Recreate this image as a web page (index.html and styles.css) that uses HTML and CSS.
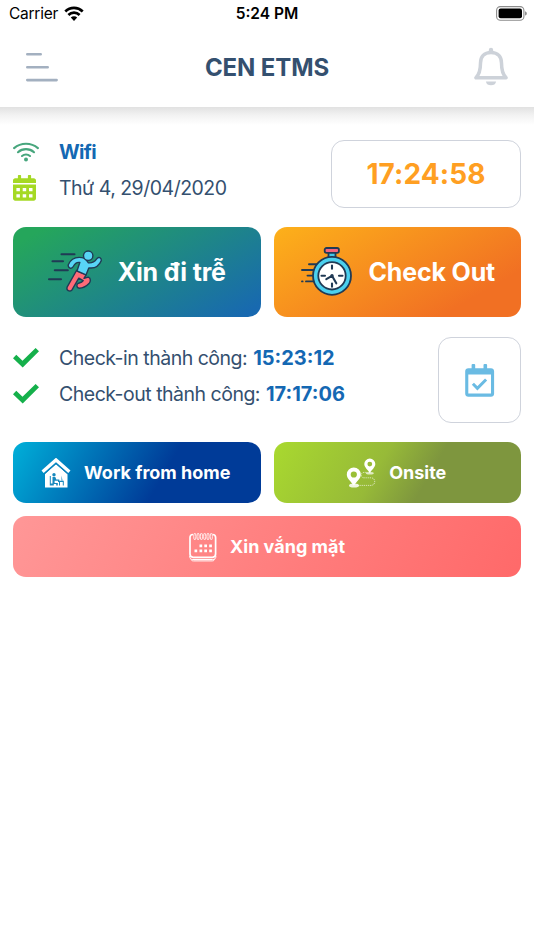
FILE: index.html
```
<!DOCTYPE html>
<html lang="vi">
<head>
    <title>CEN ETMS</title>
    <meta charset="UTF-8">
    <meta name="viewport" content="width=device-width, initial-scale=1.0">
    <link rel="stylesheet" href="styles.css">
</head>

<body>
    <header class="header">
        <div class="status-bar">
            <div class="carrier">
                <span class="carrier-name">Carrier</span>
                <svg width="20" height="16" viewBox="0 0 20 16">
                    <g fill="none" stroke="#000" stroke-width="2.7">
                        <path d="M1.3 5.4a12.6 12.6 0 0 1 17.4 0"/>
                        <path d="M4.4 9a8 8 0 0 1 11.2 0"/>
                    </g>
                    <path d="M10 14.9l-3.2-3.3a4.6 4.6 0 0 1 6.4 0z"/>
                </svg>
            </div>
            <span class="clock">5:24 PM</span>
            <svg class="battery" width="31" height="15" viewBox="0 0 31 15">
                <rect x=".6" y=".6" width="27.3" height="13.6" rx="3.8" fill="none" stroke="#8c8c8c" stroke-width="1.1"/>
                <rect x="2.6" y="2.6" width="23.4" height="9.7" rx="2"/>
                <path d="M29.2 5.2c2 .8 2 3.6 0 4.4z" fill="#777"/>
            </svg>
        </div>
        <div class="nav-bar">
            <svg class="menu-icon" width="34" height="32" viewBox="0 0 34 32">
                <path d="M2.3 3.3h13.4M2.3 16.300h20.400M2.300 29.100h29.300" stroke="#a3b0c0" stroke-width="2.600" stroke-linecap="round"/>
            </svg>
            <h1 class="title">CEN ETMS</h1>
            <svg class="bell-icon" width="36" height="40" viewBox="0 0 36 40">
                <path d="M18 5.500C11 5.500 7.500 10 7.500 16c0 7.500-1.200 11.500-4.600 14.700h30.200c-3.400-3.200-4.600-7.200-4.600-14.700C28.500 10 25 5.500 18 5.500z" fill="none" stroke="#cdd2d9" stroke-width="3.500" stroke-linejoin="round"/>
                <rect x="15.800" y=".700" width="4.400" height="5" rx="2.200" fill="#cdd2d9"/>
                <path d="M12.900 34.500h10.200a5.200 4.800 0 0 1-10.200 0z" fill="#cdd2d9"/>
            </svg>
        </div>
    </header>

    <main class="content">
        <section class="today">
            <div class="info-list">
                <div class="info-row">
                    <svg class="info-icon" width="26" height="20" viewBox="0 0 26 20">
                        <g fill="none" stroke="#47a67d" stroke-width="2.100" stroke-linecap="round">
                            <path d="M1.100 6.100a18.500 18.500 0 0 1 23.800 0"/>
                            <path d="M5 10.200a12 12 0 0 1 16 0"/>
                            <path d="M9 14a6.200 6.200 0 0 1 8 0"/>
                        </g>
                        <circle cx="13" cy="17.600" r="2" fill="#47a67d"/>
                    </svg>
                    <span class="wifi-name">Wifi</span>
                </div>
                <div class="info-row">
                    <svg class="info-icon" width="26" height="26" viewBox="0 0 26 26">
                        <path fill="#a5d924" fill-rule="evenodd" d="M0 8V5.500C0 4.300 1 3.300 2.200 3.300h2.700V.700q0-.700.700-.700h1.800q.700 0 .700.700v2.600h6.800V.700q0-.700.700-.700h1.800q.700 0 .700.700v2.600h2.700c1.200 0 2.200 1 2.200 2.200V8zM0 9.600h23v13.900c0 1.200-1 2.200-2.200 2.200H2.200C1 25.700 0 24.700 0 23.500zM3.400 13v3.200h3.500V13zM9.700 13v3.200h3.500V13zM16 13v3.200h3.500V13zM3.400 19.300v3.200h3.500v-3.200zM9.700 19.300v3.200h3.500v-3.200zM16 19.300v3.200h3.500v-3.200z"/>
                    </svg>
                    <span class="date">Thứ 4, 29/04/2020</span>
                </div>
            </div>
            <div class="time-box"><span>17:24:58</span></div>
        </section>

        <section class="actions">
            <button class="btn btn-late">
                <svg width="56" height="44" viewBox="0 0 56 44">
                    <path d="M13.500 4.200h13M4.500 11.200h10.500M6.800 20.200h13M1 29.200h12" stroke="#203a55" stroke-width="2.100" stroke-linecap="round"/>
                    <g stroke="#203a55" stroke-width="1.400" stroke-linejoin="round">
                        <path fill="#ff6b78" d="M28.500 20.500l9.700 4.200-2.200 3.700 4.200-1.300c3 1 2.500 4.500.8 6.500-2.800 2.900-6.300 4.700-9.800 4.700-3-.7-3-4-.6-5.100 2.300-.5 4-1.500 4.600-2.600l-4.400-2.400-6.800 11.700c-2.400 2.400-6 .6-4.900-2.700z"/>
                        <path fill="#58d5f6" d="M29 21l2.800-8.500c-2.900-.6-4.700.7-6.500 4-1.700 3-5.700 1.700-5-1.800C23 8.500 28.500 5.900 37 8.300l3.400 4.500c3.900.5 6-.8 8.300-4 1.900-2.500 5-1 4.500 2-2.300 5.600-6.700 7.900-12.400 7.100l-2.800 7z"/>
                        <circle cx="40.200" cy="5.700" r="4.700" fill="#58d5f6"/>
                    </g>
                </svg>
                <span class="late-text">Xin đi trễ</span>
            </button>
            <button class="btn btn-checkout">
                <svg width="52" height="50" viewBox="0 0 52 50">
                    <path d="M8 17.300h8M1 23h12M6.500 28.600h7M5 34.400h9M1 34.400h.6" stroke="#203a55" stroke-width="1.900" stroke-linecap="round"/>
                    <g stroke="#203a55" stroke-width="1.800">
                        <path d="M27.500 5h7v7h-7z" fill="#42c6ea"/>
                        <rect x="23.700" y="1" width="14.200" height="4.800" rx="1.800" fill="#f5647c"/>
                        <circle cx="31" cy="28.800" r="19" fill="#4bd0ee"/>
                        <circle cx="31" cy="28.800" r="13.700" fill="#fff"/>
                    </g>
                    <path d="M31 18.500v3.200M31 36.500v3.200M20.500 28.800H24M38 28.800h3.500M31 28.800l-5.700 3.400M31 28.800l4.300 7.500" stroke="#203a55" stroke-width="2.100" stroke-linecap="round" fill="none"/>
                    <circle cx="31" cy="28.800" r="1.700" fill="#203a55"/>
                </svg>
                <span class="checkout-text">Check Out</span>
            </button>
        </section>

        <section class="results">
            <div class="result-list">
                <div class="info-row">
                    <svg class="info-icon" width="26" height="20" viewBox="0 0 26 20">
                        <path d="M0 10.200L3.300 6.800 9.500 12.800 22.600 0 26 3.300 9.700 19.500z" fill="#15b04b"/>
                    </svg>
                    <span class="result-text">Check-in thành công:</span><b class="result-time">15:23:12</b>
                </div>
                <div class="info-row">
                    <svg class="info-icon" width="26" height="20" viewBox="0 0 26 20">
                        <path d="M0 10.200L3.300 6.800 9.500 12.800 22.600 0 26 3.300 9.700 19.500z" fill="#15b04b"/>
                    </svg>
                    <span class="result-text">Check-out thành công:</span><b class="result-time">17:17:06</b>
                </div>
            </div>
            <div class="calendar-box">
                <svg width="30" height="33" viewBox="0 0 30 33">
                    <path fill="#6abbe3" fill-rule="evenodd" d="M3.300 4.300H6.600V1q0-1 1-1h1.600q1 0 1 1v3.300h8.300V1q0-1 1-1h1.600q1 0 1 1v3.300h3.900c1.800 0 3.100 1.300 3.100 3v22.400c0 1.700-1.300 3-3.100 3H3.300c-1.800 0-3.100-1.300-3.100-3V7.300c0-1.700 1.300-3 3.100-3zM3.300 10.400v19.100h22.700V10.400z"/>
                    <path d="M7.900 19.700l4.500 4.600 8.700-8.800" fill="none" stroke="#6abbe3" stroke-width="3"/>
                </svg>
            </div>
        </section>

        <section class="requests">
            <button class="btn btn-home">
                <svg width="30" height="30" viewBox="0 0 30 30">
                    <path d="M4 16L15 6.300 26.500 16v13.500H4z" fill="#fff"/>
                    <path d="M3.500 15.800L15 5.600l11.500 10.200" fill="none" stroke="#0f7fba" stroke-width="1"/>
                    <path d="M1.600 13.700L15 1.900l13.400 11.800" fill="none" stroke="#fff" stroke-width="3.300"/>
                    <g fill="#1788bd">
                        <circle cx="13" cy="16.800" r="1.700"/>
                        <path d="M11.500 19h2.800l1 2.500h3v1.300h-4.700V25h3.200v2.500h-1.600v-1.500h-3.700zM8.800 18h1v7.500h3v2H8.800zM17 22.800h5.800v4.700h-1V24H19v3.500h-1V24h-1zM20.500 17.500l1 5h-1z"/>
                    </g>
                </svg>
                <span class="home-text">Work from home</span>
            </button>
            <button class="btn btn-onsite">
                <svg width="30" height="30" viewBox="0 0 30 30">
                    <g fill="#fff">
                        <ellipse cx="8" cy="27.500" rx="5" ry="2.100" opacity=".85"/>
                        <ellipse cx="23.800" cy="15.300" rx="4" ry="1.200" opacity=".7"/>
                        <path fill-rule="evenodd" d="M7.800 9.400a7 7 0 0 1 7 7c0 4.300-4.200 6.800-7 11.200C5 23.200.8 20.700.8 16.400a7 7 0 0 1 7-7zm0 4a3.100 3.100 0 1 0 0 6.200 3.100 3.100 0 0 0 0-6.200z"/>
                        <path fill-rule="evenodd" d="M23.800.6a5.500 5.500 0 0 1 5.500 5.500c0 3.300-3.300 5.400-5.500 9.100-2.200-3.700-5.500-5.800-5.500-9.100A5.500 5.500 0 0 1 23.800.6zm0 3.100a2.400 2.400 0 1 0 0 4.800 2.400 2.400 0 0 0 0-4.800z"/>
                    </g>
                    <path d="M20.500 14.400h-2.500c-3.800 0-3.800 5.400 0 5.400h7c5 0 5 7.600 0 7.600H12" fill="none" stroke="#fff" stroke-width=".8" stroke-dasharray="1.300 .8" opacity=".75"/>
                </svg>
                <span class="onsite-text">Onsite</span>
            </button>
            <button class="btn btn-absent">
                <svg width="28" height="30" viewBox="0 0 28 30">
                    <g fill="none" stroke="#fff">
                        <path d="M4 2.500c-2 0-3 1-3 3v16.600c0 2.200 1 3.200 3.200 3.200h19.200c2.200 0 3.200-1 3.200-3.200V5.500c0-2-1-3-3-3" stroke-width="1.700"/>
                        <path d="M.7 24c0 2.500 1 3.500 3.200 3.500h19.800c2.200 0 3.200-1 3.200-3.500M2 27.500c.6 1.100 1.300 1.400 2.600 1.400H23c1.300 0 2-.3 2.600-1.400" stroke-width="1"/>
                    </g>
                    <g fill="none" stroke="#fff" stroke-width=".8">
                        <ellipse cx="5.800" cy="4.500" rx="1.100" ry="3.400"/>
                        <ellipse cx="9.100" cy="4.500" rx="1.100" ry="3.400"/>
                        <ellipse cx="12.400" cy="4.500" rx="1.100" ry="3.400"/>
                        <ellipse cx="15.700" cy="4.500" rx="1.100" ry="3.400"/>
                        <ellipse cx="19" cy="4.500" rx="1.100" ry="3.400"/>
                        <ellipse cx="22.300" cy="4.500" rx="1.100" ry="3.400"/>
                    </g>
                    <path fill="#fff" d="M10.500 12.600h2.700v2.700h-2.700zM15.300 12.600H18v2.700h-2.700zM20.200 12.600h2.700v2.700h-2.700zM5.500 17.500h2.700v2.700H5.500zM10.500 17.500h2.700v2.700h-2.700zM15.300 17.500H18v2.700h-2.700zM20.200 17.500h2.700v2.700h-2.700z"/>
                </svg>
                <span class="absent-text">Xin vắng mặt</span>
            </button>
        </section>
    </main>
</body>
</html>
```
FILE: styles.css
```
* {
    box-sizing: border-box;
}

body {
    margin: 0;
    min-height: 950px;
    background: #fff;
    font-family: Inter, sans-serif;
    color: #34506f;
}

svg {
    display: block;
    flex-shrink: 0;
}

.header {
    height: 107px;
    background: #fff;
}

/* soft shadow under the bar, same strength from edge to edge */
.header::after {
    content: "";
    display: block;
    height: 18px;
    background: linear-gradient(#e1e1e1, #f2f2f2 45%, #fff);
}

.status-bar {
    display: grid;
    grid-template-columns: 1fr auto 1fr;
    align-items: center;
    height: 27px;
    padding: 0 7px 0 9px;
    color: #000;
    font-size: 15.5px;
}

.carrier {
    display: flex;
    align-items: center;
    gap: 6px;
}

.carrier-name {
    letter-spacing: -0.25px;
}

.clock {
    margin-right: 2px;
    font-weight: 600;
}

.battery {
    justify-self: end;
}

.nav-bar {
    display: grid;
    grid-template-columns: 1fr auto 1fr;
    align-items: center;
    height: 80px;
    padding: 0 25px;
}

.title {
    margin: 0;
    font-size: 24px;
    font-weight: 700;
    letter-spacing: -0.1px;
    color: #34506f;
}

.bell-icon {
    justify-self: end;
}

.content {
    padding: 33px 13px 0;
}

.today {
    display: flex;
    justify-content: space-between;
    height: 68px;
}

.info-row {
    display: flex;
    align-items: center;
    height: 36px;
    font-size: 20px;
    white-space: nowrap;
}

.info-icon {
    margin-right: 20px;
}

.info-list {
    margin-top: -6px;
}

.wifi-name,
.result-time {
    font-weight: 700;
    color: #1468b3;
}

.wifi-name {
    letter-spacing: -0.7px;
}

.date,
.result-text {
    font-size: 19.5px;
    letter-spacing: -0.5px;
}

.time-box,
.calendar-box {
    display: flex;
    align-items: center;
    justify-content: center;
    border: 1px solid #cfd3dc;
    border-radius: 13px;
}

.time-box {
    width: 190px;
    color: #ff9f22;
    font-size: 28px;
    font-weight: 700;
    letter-spacing: 0.1px;
}

.actions,
.requests {
    display: grid;
    grid-template-columns: 1fr 1fr;
    gap: 13px;
}

.actions {
    margin-top: 19px;
}

.btn {
    display: flex;
    align-items: center;
    justify-content: center;
    padding: 0;
    border: none;
    border-radius: 13px;
    color: #fff;
    font-family: inherit;
    font-weight: 700;
    white-space: nowrap;
}

.actions .btn {
    height: 90px;
    gap: 14px;
    font-size: 25px;
    letter-spacing: -0.15px;
}

.actions .btn-checkout {
    gap: 15px;
    padding-left: 2px;
}

.btn-late {
    background: linear-gradient(150deg, #25a65b 8%, #1869b0 95%);
}

.btn-checkout {
    background: linear-gradient(150deg, #fdb11a, #f17023 80%);
}

.results {
    display: flex;
    justify-content: space-between;
    margin-top: 20px;
}

.result-list {
    margin-top: 3px;
}

.result-time {
    margin-left: 6px;
}

.calendar-box {
    width: 83px;
    height: 86px;
}

.requests {
    margin-top: 19px;
}

.requests .btn {
    height: 61px;
    gap: 13px;
    font-size: 18px;
}

.requests .btn-home,
.requests .btn-onsite {
    padding-right: 2px;
}

.btn-home {
    background: linear-gradient(120deg, #00b0d9, #003b98 60%);
}

.btn-onsite {
    background: linear-gradient(120deg, #a9d92f, #97ba38 42%, #7e963e 62%);
}

.requests .btn-absent {
    grid-column: 1 / 3;
    background: linear-gradient(120deg, #ff9797, #ff6969);
}
```
